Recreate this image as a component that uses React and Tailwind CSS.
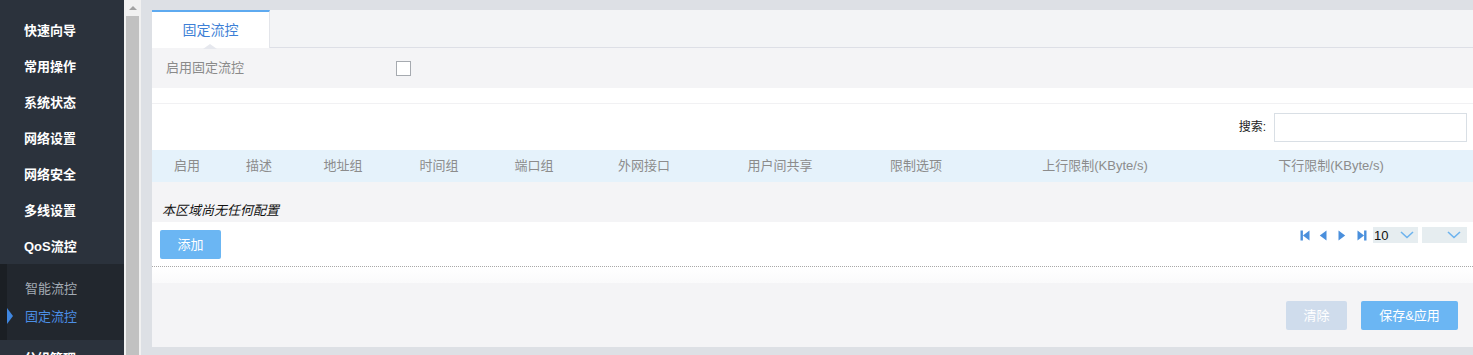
import React from "react";

const font = { fontFamily: '"Liberation Sans", "Noto Sans CJK SC", sans-serif' };

const menu = ["快速向导", "常用操作", "系统状态", "网络设置", "网络安全", "多线设置", "QoS流控"];

const cols = [
  ["启用", 70],
  ["描述", 74],
  ["地址组", 94],
  ["时间组", 98],
  ["端口组", 92],
  ["外网接口", 128],
  ["用户间共享", 144],
  ["限制选项", 128],
  ["上行限制(KByte/s)", 230],
  ["下行限制(KByte/s)", 242],
];

function Chevron() {
  return (
    <svg width="14" height="8" viewBox="0 0 14 8">
      <path d="M1 1 L7 6.5 L13 1" fill="none" stroke="#6db3ee" strokeWidth="1.6" />
    </svg>
  );
}

function PagerIcon({ type }) {
  const c = "#4a8fdc";
  if (type === "first")
    return (
      <svg width="10" height="11" viewBox="0 0 10 11">
        <rect x="0.5" y="0.5" width="2.4" height="10" fill={c} />
        <path d="M9.5 0.5 L2.9 5.5 L9.5 10.5 Z" fill={c} />
      </svg>
    );
  if (type === "prev")
    return (
      <svg width="8" height="11" viewBox="0 0 8 11">
        <path d="M7.5 0.5 L0.8 5.5 L7.5 10.5 Z" fill={c} />
      </svg>
    );
  if (type === "next")
    return (
      <svg width="8" height="11" viewBox="0 0 8 11">
        <path d="M0.5 0.5 L7.2 5.5 L0.5 10.5 Z" fill={c} />
      </svg>
    );
  return (
    <svg width="10" height="11" viewBox="0 0 10 11">
      <path d="M0.5 0.5 L7.1 5.5 L0.5 10.5 Z" fill={c} />
      <rect x="7.1" y="0.5" width="2.4" height="10" fill={c} />
    </svg>
  );
}

export default function App() {
  return (
    <div className="w-[1473px] h-[355px] overflow-hidden flex bg-[#dde0e5]" style={font}>
      {/* Sidebar */}
      <div className="w-[124px] h-full bg-[#2b323c] flex flex-col pt-3 shrink-0 overflow-hidden">
        {menu.map((m) => (
          <div key={m} className="h-9 shrink-0 flex items-center pl-6 text-white text-[13px] font-bold leading-none">
            {m}
          </div>
        ))}
        <div className="bg-[#22272e] flex h-[76px] shrink-0">
          <div className="w-[7px] bg-[#1b1f24]" />
          <div className="flex-1 flex flex-col pt-[10px] relative">
            <div className="h-7 shrink-0 flex items-center pl-[18px] text-[13px] text-[#a4abb4] leading-none">智能流控</div>
            <div className="h-7 shrink-0 flex items-center pl-[18px] text-[13px] text-[#4c8fe6] leading-none relative">
              <span className="absolute left-0 top-[6px] w-0 h-0 border-y-[8px] border-y-transparent border-l-[6px] border-l-[#3f86e0]" />
              固定流控
            </div>
          </div>
        </div>
        <div className="h-9 shrink-0 flex items-center pl-6 text-white text-[13px] font-bold leading-none">分组管理</div>
      </div>

      {/* Scrollbar */}
      <div className="w-[17px] h-full bg-[#f1f1f1] shrink-0 flex flex-col items-center">
        <div className="h-[16px] flex items-center justify-center">
          <span className="w-0 h-0 border-x-[4px] border-x-transparent border-b-[4px] border-b-[#a3a3a3]" />
        </div>
        <div className="w-[13px] flex-1 bg-[#c1c1c1]" />
      </div>

      {/* Main */}
      <div className="flex-1 pl-[11px] pt-[10px] min-w-0">
        <div className="h-[337px] bg-white flex flex-col">
          {/* Tabs */}
          <div className="h-[38px] bg-[#f3f4f6] border-b border-[#dddfe6] flex shrink-0">
            <div className="w-[118px] h-[38px] bg-white border-t-2 border-[#5eaaf0] border-r border-r-[#e3e5ea] flex items-center justify-center text-[14px] text-[#3d7fd6] relative">
              固定流控
              <span className="absolute left-[51px] bottom-[-1px] w-0 h-0 border-x-[7px] border-x-transparent border-b-[5px] border-b-[#e6e8ee]" />
            </div>
          </div>
          {/* Enable row */}
          <div className="h-[40px] bg-[#f4f4f6] flex items-center shrink-0">
            <div className="w-[244px] pl-[14px] text-[13px] text-[#8a8a8a]">启用固定流控</div>
            <div className="w-[15px] h-[15px] bg-white border border-[#a6aab0]" />
          </div>
          <div className="h-[16px] border-b border-[#f1f1f3] shrink-0" />
          {/* Search */}
          <div className="h-[46px] flex items-start justify-end pt-[9px] pr-[6px] shrink-0">
            <span className="text-[12px] text-[#222] leading-[29px] mr-[8px]">搜索:</span>
            <div className="w-[193px] h-[29px] border border-[#d9dfe5] bg-white" />
          </div>
          {/* Header */}
          <div className="h-8 bg-[#e5f2fb] flex items-center shrink-0">
            {cols.map(([t, w]) => (
              <div key={t} style={{ width: w }} className="text-center text-[13px] text-[#8c8c8c] shrink-0">
                {t}
              </div>
            ))}
          </div>
          {/* Empty */}
          <div className="h-10 bg-[#f4f4f6] flex items-end pb-[3px] pl-[10px] shrink-0">
            <span className="text-[13px] italic text-[#111] leading-[17px]">本区域尚无任何配置</span>
          </div>
          {/* Actions */}
          <div className="h-[45px] flex items-start justify-between pl-[8px] pr-[6px] border-b border-dotted border-[#a8a8a8] shrink-0">
            <button className="mt-[8px] w-[61px] h-[29px] bg-[#6bb6f3] rounded-[2px] text-white text-[13px]">添加</button>
            <div className="mt-[5px] flex items-center">
              <div className="flex items-center gap-[9px] mr-[6px]">
                <PagerIcon type="first" />
                <PagerIcon type="prev" />
                <span className="ml-[2px] flex"><PagerIcon type="next" /></span>
                <span className="ml-[2px] flex"><PagerIcon type="last" /></span>
              </div>
              <div className="w-[45px] h-[16px] bg-[#e6edf0] flex items-center justify-between pl-[1px] pr-[4px]">
                <span className="text-[13px] text-[#111] leading-none">10</span>
                <Chevron />
              </div>
              <div className="w-[45px] h-[16px] bg-[#e6edf0] ml-[4px] flex items-center justify-end pr-[6px]">
                <Chevron />
              </div>
            </div>
          </div>
          <div className="h-[16px] bg-gradient-to-b from-white to-[#fafafb] shrink-0" />
          {/* Footer */}
          <div className="flex-1 bg-[#f4f4f6] flex justify-end items-start pt-[18px] pr-[15px] gap-[14px]">
            <button className="w-[61px] h-[29px] bg-[#cfdcec] rounded-[2px] text-white text-[13px]">清除</button>
            <button className="w-[97px] h-[29px] bg-[#6bb6f3] rounded-[2px] text-white text-[13px]">保存&amp;应用</button>
          </div>
        </div>
      </div>
    </div>
  );
}
